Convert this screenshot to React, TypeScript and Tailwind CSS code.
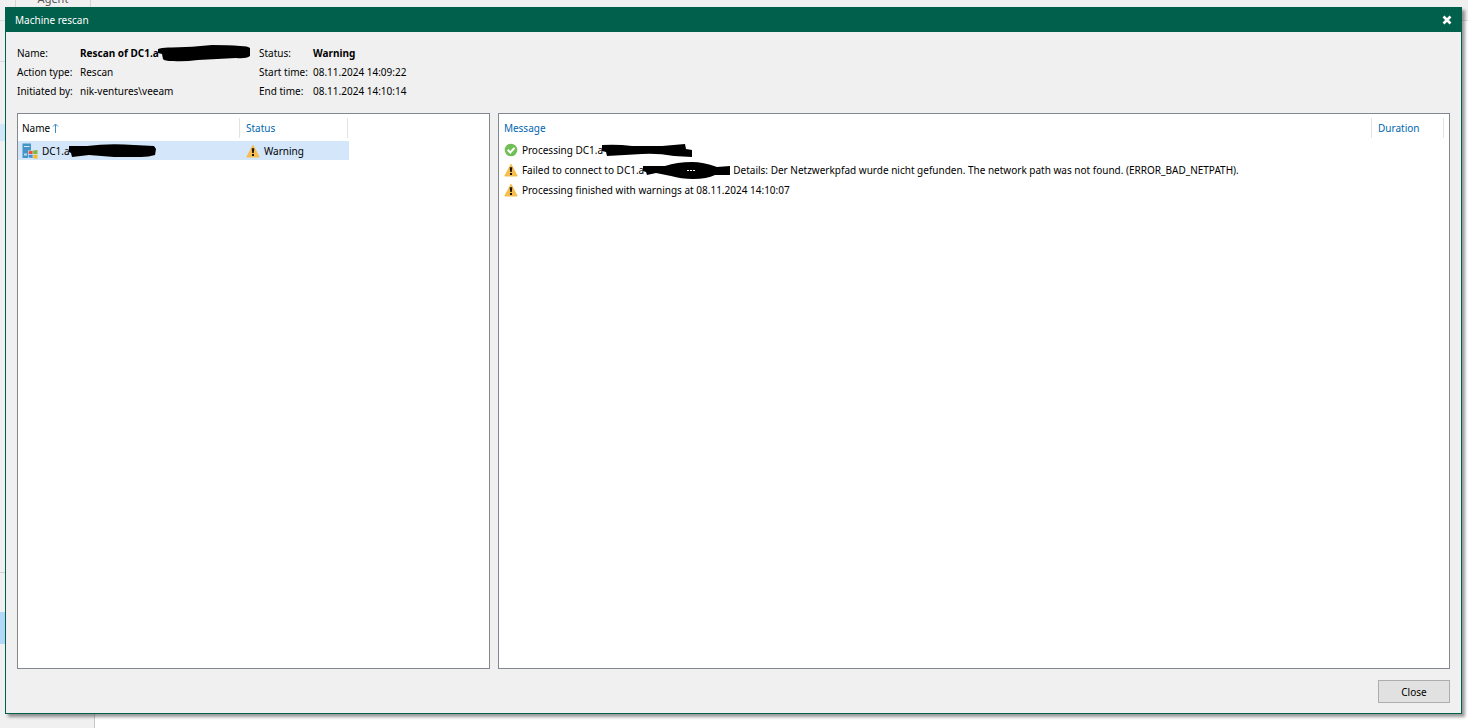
import React from "react";

const details = [
  ["Name:", "Status:"],
  ["Action type:", "Rescan", "Start time:", "08.11.2024 14:09:22"],
  ["Initiated by:", "nik-ventures\\veeam", "End time:", "08.11.2024 14:10:14"],
];

const WarningIcon = () => (
  <svg width="14" height="14" viewBox="0 0 14 14" className="shrink-0">
    <path d="M7 1.3 13.2 13H.8Z" fill="#f6bd4f" stroke="#f6bd4f" strokeLinejoin="round" />
    <path d="M5.7 4.3h2.6L7.8 9H6.2Z" fill="#1c1608" />
    <rect x="6" y="10" width="2" height="2" fill="#1c1608" />
  </svg>
);

const SuccessIcon = () => (
  <svg width="14" height="14" viewBox="0 0 14 14" className="shrink-0">
    <circle cx="7" cy="7" r="6.3" fill="#72bf58" />
    <path d="m3.7 6.8 2.6 2.7 4.2-4.6" fill="none" stroke="#fff" strokeWidth="2" />
  </svg>
);

const ServerIcon = () => (
  <svg width="16" height="16" viewBox="0 0 16 16" className="shrink-0">
    <path d="M.5.5h8.5v7H6V15H.5Z" fill="#4594c8" />
    <path d="M2 3.5h5.5" stroke="#d5ebf8" />
    <path d="M2 11.5h3" stroke="#b8dcf0" strokeWidth="2" />
    <path d="m6.6 8.2 4-.5v3.4h-4Z" fill="#e8543b" />
    <path d="m11.2 7.6 4.3-.6v4.1h-4.3Z" fill="#7eb93f" />
    <path d="M6.6 11.7h4v3.4l-4-.5Z" fill="#3f8fdc" />
    <path d="M11.2 11.7h4.3v4l-4.3-.5Z" fill="#f5bb2b" />
  </svg>
);

const App = () => {
  return (
    <div className="relative flex h-screen min-h-[400px] flex-col overflow-hidden bg-[#f0f0f0] font-['Noto_Sans','Open_Sans',sans-serif] text-[10px] leading-5 text-black">
      {/* main window behind the dialog */}
      <div className="flex h-[21px] shrink-0 items-start border-b border-[#dcdcdc]">
        <div className="ml-[15px] flex h-[7px] w-[76px] items-end justify-center overflow-hidden border-x border-[#d5d5d5] text-[11px] leading-4 text-[#555]">
          Agent
        </div>
      </div>
      <div className="flex flex-1">
        <div className="flex w-[95px] flex-col border-r border-[#c8c8c8]">
          <div className="h-[41px] border-b border-[#d5d9e0]" />
          <div className="mt-[62px] h-[17px] bg-[#d3e6f9]" />
          <div className="mt-[431px] border-t border-[#d0d0d0]" />
          <div className="mt-[39px] h-8 bg-[#b3d7f8]" />
        </div>
        <div className="flex-1 bg-white" />
      </div>

      <div
        role="dialog"
        aria-labelledby="dialog-title"
        className="absolute top-[7px] right-[6px] bottom-[14px] left-[5px] flex flex-col border border-[#00604b] bg-[#f0f0f0] shadow-[3px_3px_3px_rgba(0,0,0,0.4)]"
      >
        <header className="flex h-6 shrink-0 items-center justify-between bg-[#00604b] pr-2 pl-[9px] text-white">
          <h1 id="dialog-title">Machine rescan</h1>
          <button aria-label="Close dialog" className="p-px">
            <svg width="10" height="10" viewBox="0 0 10 10">
              <path d="m1.5 1.5 7 7m0-7-7 7" stroke="#fff" strokeWidth="2.6" />
            </svg>
          </button>
        </header>

        <main className="flex min-h-0 flex-1 flex-col px-[11px] pt-3 pb-[10px]">
          <dl className="grid grid-cols-[63px_179px_54px_1fr] leading-[19px] whitespace-nowrap">
            <dt>{details[0][0]}</dt>
            <dd className="flex h-[19px] items-center font-bold">
              Rescan of DC1.a
              <svg width="93" height="17" viewBox="0 0 93 17" className="-ml-px shrink-0">
                <path d="M0 4Q4 2 14 2.5 34 2 54 0 70 0 82 1 90 1 92 3v8Q88 14 78 13L40 15Q25 17 15 16 6 16 5 14L4 9 0 8Z" />
              </svg>
            </dd>
            <dt>{details[0][1]}</dt>
            <dd className="font-bold">Warning</dd>
            {details.slice(1).map(([label, value, timeLabel, time]) => (
              <React.Fragment key={label}>
                <dt>{label}</dt>
                <dd>{value}</dd>
                <dt>{timeLabel}</dt>
                <dd>{time}</dd>
              </React.Fragment>
            ))}
          </dl>

          <div className="mt-3 flex min-h-0 flex-1 gap-2">
            <section className="w-[33%] border border-[#828790] bg-white pt-1">
              <table className="w-[331px] table-fixed text-left">
                <thead>
                  <tr className="h-[23px] align-top">
                    <th className="w-[222px] p-0 font-normal">
                      <div className="flex h-5 items-center border-r border-[#e3e3e3] pl-1">
                        Name
                        <svg width="7" height="10" viewBox="0 0 7 10" className="ml-0.5">
                          <path d="M3.5 10V1M1 3.5 3.5 1 6 3.5" fill="none" stroke="#3f8fc8" />
                        </svg>
                      </div>
                    </th>
                    <th className="p-0 pr-px font-normal text-[#0066b0]">
                      <div className="h-5 border-r border-[#e3e3e3] pl-1.5">Status</div>
                    </th>
                  </tr>
                </thead>
                <tbody>
                  <tr className="bg-[#d3e6fa]">
                    <td className="p-0">
                      <div className="flex h-[19px] items-center pl-1">
                        <ServerIcon />
                        <span className="ml-1">DC1.a</span>
                        <svg width="87" height="14" viewBox="0 0 87 14" className="-ml-px">
                          <path d="M0 2 18 2Q40-1 65 1l20 1 2 3-1 6Q80 13 72 13H45L20 11 3 13 2 9 0 8Z" />
                        </svg>
                      </div>
                    </td>
                    <td className="p-0">
                      <div className="flex h-[19px] items-center gap-1 pl-1.5">
                        <WarningIcon />
                        Warning
                      </div>
                    </td>
                  </tr>
                </tbody>
              </table>
            </section>

            <section className="min-w-0 flex-1 border border-[#828790] bg-white pt-1 pr-[5px]">
              <table className="w-full table-fixed text-left whitespace-nowrap">
                <thead>
                  <tr className="h-[22px] align-top text-[#0066b0]">
                    <th className="p-0 font-normal">
                      <div className="h-5 border-r border-[#e3e3e3] pl-[5px]">Message</div>
                    </th>
                    <th className="w-[72px] p-0 font-normal">
                      <div className="h-5 border-r border-[#e3e3e3] pl-1.5">Duration</div>
                    </th>
                  </tr>
                </thead>
                <tbody>
                  <tr>
                    <td colSpan={2} className="p-0">
                      <div className="flex h-5 items-center pl-[5px]">
                        <SuccessIcon />
                        <span className="ml-1">Processing DC1.a</span>
                        <svg width="90" height="13" viewBox="0 0 90 13" className="-ml-px">
                          <path d="M0 1Q15 0 30 2L60 2 83 0 84 5 90 6v7L72 12Q55 9 40 10L5 12 4 8 0 7Z" />
                        </svg>
                      </div>
                    </td>
                  </tr>
                  <tr>
                    <td colSpan={2} className="p-0">
                      <div className="flex h-5 items-center pl-[5px]">
                        <WarningIcon />
                        <span className="ml-1">Failed to connect to DC1.a</span>
                        <svg width="87" height="17" viewBox="0 0 87 17" className="-ml-px">
                          <path d="M0 4 22 4Q34 0 49 0 60 0 74 5L87 4v9L72 13Q64 17 50 17 38 17 28 14L13 11 4 13 3 10 0 9Z" />
                          <path d="M44 8.5h2m1 0h2m1 0h2" stroke="#fff" />
                        </svg>
                        <span className="ml-[3px]">
                          Details: Der Netzwerkpfad wurde nicht gefunden. The network path was not
                          found. (ERROR_BAD_NETPATH).
                        </span>
                      </div>
                    </td>
                  </tr>
                  <tr>
                    <td colSpan={2} className="p-0">
                      <div className="flex h-5 items-center gap-1 pl-[5px]">
                        <WarningIcon />
                        Processing finished with warnings at 08.11.2024 14:10:07
                      </div>
                    </td>
                  </tr>
                </tbody>
              </table>
            </section>
          </div>

          <footer className="mt-[11px] flex justify-end">
            <button className="h-[23px] w-[72px] border border-[#adadad] bg-[#e1e1e1]">
              Close
            </button>
          </footer>
        </main>
      </div>
    </div>
  );
};

export default App;
